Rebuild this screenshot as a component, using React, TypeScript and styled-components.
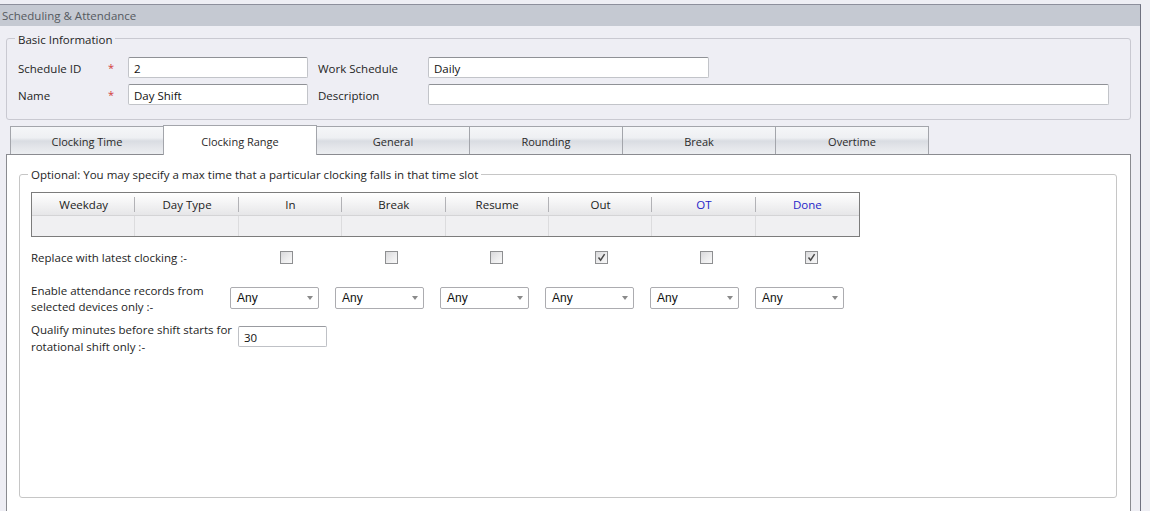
import React from 'react';
import styled, { createGlobalStyle } from 'styled-components';

const GlobalStyle = createGlobalStyle`
  html, body {
    margin: 0;
    padding: 0;
  }
  body {
    background: #eeeef4;
    font-family: 'Open Sans', 'Noto Sans', sans-serif;
    font-size: 11.5px;
    color: #1e1e1e;
    overflow: hidden;
  }
  * {
    box-sizing: border-box;
  }
`;

const columns = ['Weekday', 'Day Type', 'In', 'Break', 'Resume', 'Out', 'OT', 'Done'];
const replaceChecks = [false, false, false, true, false, true];
const tabs = ['Clocking Time', 'Clocking Range', 'General', 'Rounding', 'Break', 'Overtime'];

const CheckMark = (): JSX.Element => (
  <svg width="9" height="9" viewBox="0 0 9 9">
    <path d="M1.5 4.5 L3.6 7.2 L7.6 1.2" fill="none" stroke="#4a4a4a" strokeWidth="1.5" />
  </svg>
);

const Arrow = (): JSX.Element => (
  <svg width="6" height="4" viewBox="0 0 6 4">
    <path d="M0 0 H6 L3 4 Z" fill="#8a8a8a" />
  </svg>
);

const App = (): JSX.Element => {
  return (
    <>
      <GlobalStyle />
      <Window>
        <TitleBar>Scheduling &amp; Attendance</TitleBar>
        <Body>
          <GroupBox>
            <Legend drop={4}>Basic Information</Legend>
            <BasicGrid>
              <Label>Schedule ID</Label>
              <Required>*</Required>
              <TextBox>2</TextBox>
              <SideLabel>Work Schedule</SideLabel>
              <TextBox width={281}>Daily</TextBox>
              <Label>Name</Label>
              <Required>*</Required>
              <TextBox>Day Shift</TextBox>
              <SideLabel>Description</SideLabel>
              <TextBox width={681} />
            </BasicGrid>
          </GroupBox>

          <TabStrip>
            {tabs.map((t) => (
              <Tab key={t} active={t === 'Clocking Range'}>
                {t}
              </Tab>
            ))}
          </TabStrip>

          <TabPanel>
            <RangeBox>
              <Legend drop={2}>
                Optional: You may specify a max time that a particular clocking falls in that time slot
              </Legend>
              <Content>
                <DataGrid>
                  {columns.map((c) => (
                    <HeaderCell key={c} highlight={c === 'OT' || c === 'Done'}>
                      {c}
                    </HeaderCell>
                  ))}
                  {columns.map((c) => (
                    <DataCell key={`row-${c}`} />
                  ))}
                </DataGrid>

                <OptionRow>
                  <OptionLabel>Replace with latest clocking :-</OptionLabel>
                  {replaceChecks.map((checked, i) => (
                    <CheckCell key={i}>
                      <CheckBox>{checked && <CheckMark />}</CheckBox>
                    </CheckCell>
                  ))}
                </OptionRow>

                <OptionRow spaced>
                  <OptionLabel>
                    Enable attendance records from
                    <br />
                    selected devices only :-
                  </OptionLabel>
                  {replaceChecks.map((_, i) => (
                    <Combo key={i}>
                      <span>Any</span>
                      <Arrow />
                    </Combo>
                  ))}
                </OptionRow>

                <OptionRow qualify>
                  <OptionLabel tall>
                    Qualify minutes before shift starts for
                    <br />
                    rotational shift only :-
                  </OptionLabel>
                  <MinutesBox>30</MinutesBox>
                </OptionRow>
              </Content>
            </RangeBox>
          </TabPanel>
        </Body>
      </Window>
    </>
  );
};

const Window = styled.div`
  width: 1141px;
  height: 520px;
  margin-top: 4px;
  border-top: 1px solid #8d8f9c;
  border-right: 1px solid #6f7180;
  overflow: hidden;
`;

const TitleBar = styled.div`
  height: 21px;
  line-height: 20px;
  padding: 1px 0 0 2px;
  background: #c5c9d2;
  color: #55595f;
`;

const Body = styled.div`
  padding: 2px 9px 0 6px;
`;

const GroupBox = styled.fieldset`
  margin: 0;
  padding: 0 8px 14px;
  border: 1px solid #c9c9d1;
  border-radius: 3px;
  min-width: 0;
`;

const Legend = styled.legend<{ drop: number }>`
  padding: ${({ drop }) => drop}px 3px 0;
  line-height: 16px;
  color: #1e1e1e;
`;

const BasicGrid = styled.div`
  display: grid;
  grid-template-columns: 90px 20px 180px 120px auto;
  grid-auto-rows: 21px;
  row-gap: 6px;
  align-items: center;
  margin: 9px 0 0 3px;
`;

const Label = styled.div`
  padding-top: 2px;
  color: #1e1e1e;
`;

const SideLabel = styled(Label)`
  padding-left: 10px;
`;

const Required = styled.div`
  color: #d23a3a;
  font-size: 11px;
  line-height: 10px;
  align-self: center;
`;

const TextBox = styled.div<{ width?: number }>`
  width: ${({ width }) => width ?? 180}px;
  height: 21px;
  line-height: 17px;
  padding: 2px 5px 0;
  background: #ffffff;
  border: 1px solid #c2c4c9;
  border-top-color: #8f9196;
  border-radius: 2px;
  color: #111111;
`;

const TabStrip = styled.div`
  display: flex;
  align-items: flex-end;
  height: 30px;
  margin-top: 5px;
  padding-left: 4px;
  position: relative;
  z-index: 1;
`;

const Tab = styled.div<{ active: boolean }>`
  width: 154px;
  height: ${({ active }) => (active ? 30 : 28)}px;
  margin-bottom: ${({ active }) => (active ? 0 : 1)}px;
  margin-right: -1px;
  display: flex;
  align-items: center;
  justify-content: center;
  font-size: 11px;
  color: #2a2a2a;
  border: 1px solid #a3a5ab;
  border-bottom: none;
  background: ${({ active }) =>
    active
      ? '#ffffff'
      : 'linear-gradient(#f5f6f8 0%, #eef0f3 40%, #d9dce2 52%, #e4e6ea 75%, #eceef1 100%)'};
  padding-top: ${({ active }) => (active ? 2 : 1)}px;
`;

const TabPanel = styled.div`
  margin-top: -1px;
  height: 400px;
  background: #ffffff;
  border: 1px solid #8a8b90;
  padding: 10px 13px 0 12px;
`;

const RangeBox = styled.fieldset`
  margin: 0;
  height: 333px;
  padding: 0 8px;
  border: 1px solid #c6c6c6;
  border-radius: 3px;
  min-width: 0;
`;

const Content = styled.div`
  margin: 9px 0 0 3px;
`;

const DataGrid = styled.div`
  width: 829px;
  display: grid;
  grid-template-columns: repeat(8, 1fr);
  grid-template-rows: 23px 20px;
  border: 1px solid #7c7c7c;
`;

const HeaderCell = styled.div<{ highlight: boolean }>`
  position: relative;
  display: flex;
  align-items: center;
  justify-content: center;
  padding-top: 1px;
  color: ${({ highlight }) => (highlight ? '#2424c8' : '#222222')};
  background: linear-gradient(#ffffff 0%, #f4f4f5 45%, #e6e6e8 100%);
  border-bottom: 1px solid #d4d4d6;

  &:not(:nth-child(8))::after {
    content: '';
    position: absolute;
    right: 0;
    top: 4px;
    bottom: 3px;
    width: 1px;
    background: #b2b2b6;
  }
`;

const DataCell = styled.div`
  background: #f0f0f2;
  border-right: 1px solid #dcdcde;

  &:last-child {
    border-right: none;
  }
`;

const OptionRow = styled.div<{ spaced?: boolean; qualify?: boolean }>`
  display: grid;
  grid-template-columns: 199px repeat(6, 105px);
  align-items: ${({ spaced, qualify }) => (spaced || qualify ? 'start' : 'center')};
  margin-top: ${({ spaced, qualify }) => (spaced ? 16 : qualify ? 6 : 12)}px;
`;

const OptionLabel = styled.div<{ tall?: boolean }>`
  line-height: ${({ tall }) => (tall ? 16.5 : 16)}px;
  padding-top: 1px;
  color: #1e1e1e;
  white-space: nowrap;
`;

const CheckCell = styled.div`
  padding-left: 50px;
  display: flex;
  align-items: center;
`;

const CheckBox = styled.div`
  width: 13px;
  height: 13px;
  border: 1px solid #8e8f91;
  background: linear-gradient(135deg, #d9d9db 0%, #eeeeef 60%, #f8f8f8 100%);
  display: flex;
  align-items: center;
  justify-content: center;
`;

const Combo = styled.div`
  width: 89px;
  height: 22px;
  margin-top: 5px;
  padding: 0 5px 0 6px;
  display: flex;
  align-items: center;
  justify-content: space-between;
  border: 1px solid #acacb0;
  border-radius: 2px;
  background: #ffffff;
  font-family: 'Liberation Sans', Arial, sans-serif;
  font-size: 12px;
  color: #111111;
`;

const MinutesBox = styled.div`
  width: 89px;
  height: 21px;
  margin: 5px 0 0 8px;
  line-height: 17px;
  padding: 2px 5px 0;
  border: 1px solid #bfc1c6;
  border-top-color: #999ba0;
  border-radius: 2px;
  background: #ffffff;
  color: #111111;
`;

export default App;
